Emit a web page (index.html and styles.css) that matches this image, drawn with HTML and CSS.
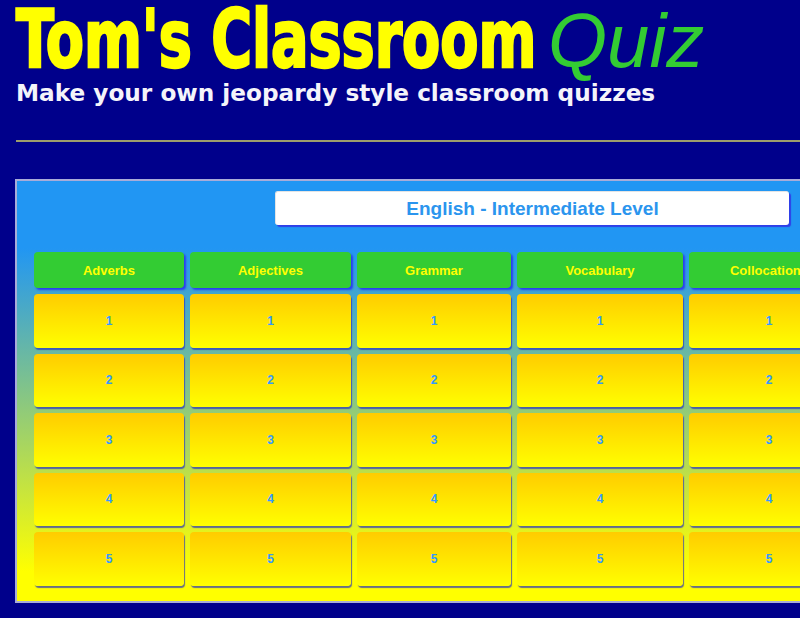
FILE: index.html
```html
<!DOCTYPE html>
<html lang="en">
<head>
<meta charset="utf-8">
<title>Tom's Classroom Quiz</title>
<link rel="stylesheet" href="styles.css">
</head>
<body>
<header class="masthead">
  <h1 class="logo"><span class="logo-main"><span class="logo-text">Tom's Classroom</span></span><span class="logo-quiz">Quiz</span></h1>
  <p class="tagline">Make your own jeopardy style classroom quizzes</p>
</header>
<hr class="rule">
<section class="board">
  <div class="board-title">English - Intermediate Level</div>
  <div class="grid">
    <div class="cat">Adverbs</div>
    <div class="cat">Adjectives</div>
    <div class="cat">Grammar</div>
    <div class="cat">Vocabulary</div>
    <div class="cat">Collocations</div>
    <div class="cell">1</div><div class="cell">1</div><div class="cell">1</div><div class="cell">1</div><div class="cell">1</div>
    <div class="cell">2</div><div class="cell">2</div><div class="cell">2</div><div class="cell">2</div><div class="cell">2</div>
    <div class="cell">3</div><div class="cell">3</div><div class="cell">3</div><div class="cell">3</div><div class="cell">3</div>
    <div class="cell">4</div><div class="cell">4</div><div class="cell">4</div><div class="cell">4</div><div class="cell">4</div>
    <div class="cell">5</div><div class="cell">5</div><div class="cell">5</div><div class="cell">5</div><div class="cell">5</div>
  </div>
</section>
</body>
</html>
```
FILE: styles.css
```css
html {
  overflow: hidden;
}
body {
  margin: 0;
  background: #00008b;
  font-family: "Liberation Sans", Arial, sans-serif;
}
.masthead {
  padding: 3px 0 0 16px;
}
.logo {
  margin: 0;
  display: flex;
  align-items: baseline;
  height: 76px;
  line-height: 74px;
  font-weight: normal;
}
.logo-main {
  display: inline-block;
  width: 532px;
  flex: none;
}
.logo-text {
  display: inline-block;
  white-space: nowrap;
  font-family: "DejaVu Sans", sans-serif;
  font-stretch: condensed;
  font-weight: bold;
  font-size: 80px;
  color: #ffff00;
  -webkit-text-stroke: 2.5px #ffff00;
  transform: scaleX(0.772);
  transform-origin: 0 50%;
}
.logo-quiz {
  font-family: "Liberation Sans", Arial, sans-serif;
  font-style: italic;
  font-size: 76px;
  color: #33cc33;
}
.tagline {
  margin: 0;
  font-family: "DejaVu Sans", Verdana, sans-serif;
  font-weight: bold;
  font-size: 23.2px;
  line-height: 28px;
  color: #f4f4fa;
}
.rule {
  border: 0;
  height: 2px;
  background: #9c9c6c;
  margin: 33px 0 0 16px;
}
.board {
  margin: 37px 0 0 15px;
  width: max-content;
  border: 2px solid #a8acd8;
  border-right: 0;
  padding: 10px 17px 15px 17px;
  background: linear-gradient(to bottom, #2196f3 16%, #ffff00 93%);
}
.board-title {
  margin: 0 0 27px 241px;
  width: 514px;
  height: 34px;
  box-sizing: border-box;
  background: #ffffff;
  border-radius: 3px;
  border-top: 1px solid #e4e4e4;
  border-left: 1px solid #e4e4e4;
  box-shadow: 2px 2px 1px #2f3fe8;
  color: #2b95ee;
  font-weight: bold;
  font-size: 19px;
  display: flex;
  align-items: center;
  justify-content: center;
}
.grid {
  display: grid;
  grid-template-columns: 150px 161px 154px 166px 160px;
  grid-template-rows: 36px repeat(5, 53.5px);
  gap: 6px;
}
.cat {
  background: #33cc33;
  border-radius: 4px;
  box-shadow: 2px 2px 2px #2a3ef0;
  color: #ffff00;
  font-weight: bold;
  font-size: 13px;
  display: flex;
  align-items: center;
  justify-content: center;
}
.cell {
  background: linear-gradient(to bottom, #ffcc00, #ffff00);
  border-radius: 4px;
  box-shadow: 1px 2px 1px rgba(40, 50, 190, 0.7);
  color: #3399ff;
  font-weight: bold;
  font-size: 12px;
  display: flex;
  align-items: center;
  justify-content: center;
}
```
